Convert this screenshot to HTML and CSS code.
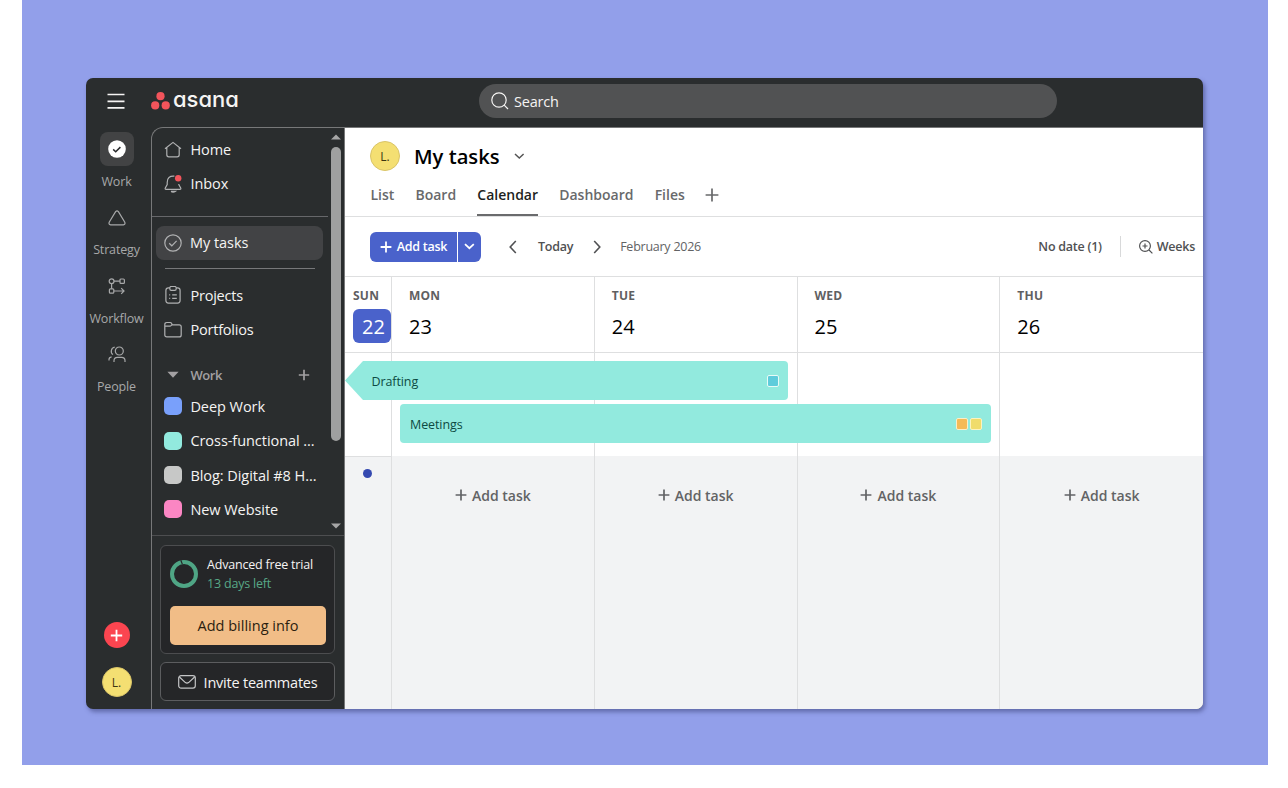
FILE: index.html
```html
<!DOCTYPE html>
<html lang="en">
<head>
  <meta charset="UTF-8" />
  <title>My tasks - Asana</title>
  <link rel="stylesheet" href="styles.css">
</head>
<body>
  <div class="backdrop">
    <div class="window">

      <header class="topbar">
        <svg class="menu" width="18" height="16" viewBox="0 0 18 16"><path d="M.5 1.5h17M.5 8.3h17M.5 14.8h17" /></svg>
        <div class="logo">
          <svg width="19" height="18" viewBox="0 0 19 18"><circle cx="9.5" cy="4.2" r="4.1" /><circle cx="4.2" cy="13.4" r="4.1" /><circle cx="14.7" cy="13.4" r="4.1" /></svg>
          <span>asana</span>
        </div>
        <div class="search">
          <svg width="18" height="18" viewBox="0 0 18 18"><circle cx="8" cy="8" r="7.2" /><path d="M13.2 13.2l3.8 3.8" /></svg>
          <span>Search</span>
        </div>
      </header>

      <nav class="rail">
        <div class="rail-item">
          <span class="rail-icon active">
            <svg width="18" height="18" viewBox="0 0 18 18"><circle cx="9" cy="9" r="8.8" fill="#fff" stroke="none" /><path d="M5.2 9.4l2.5 2.4 4.7-4.7" stroke="#2a2b2d" stroke-width="1.5" /></svg>
          </span>
          <span class="rail-label">Work</span>
        </div>
        <div class="rail-item">
          <span class="rail-icon">
            <svg width="18" height="16" viewBox="0 0 18 16"><path d="M7.6 1.6Q9 0 10.4 1.6L16.8 12.2Q17.6 14.6 15.4 14.9H2.6Q.4 14.6 1.2 12.2Z" /></svg>
          </span>
          <span class="rail-label">Strategy</span>
        </div>
        <div class="rail-item">
          <span class="rail-icon">
            <svg width="18" height="18" viewBox="0 0 18 18"><circle cx="3.6" cy="4.2" r="2.4" /><rect x="12" y="2" width="4.4" height="4.4" rx="1" /><rect x="1.4" y="11.8" width="4.4" height="4.4" rx="1" /><path d="M6 4.2h6M3.6 6.6v5.2M5.8 14h10M13.2 11.2l2.8 2.8-2.8 2.8" /></svg>
          </span>
          <span class="rail-label">Workflow</span>
        </div>
        <div class="rail-item">
          <span class="rail-icon">
            <svg width="18" height="17" viewBox="0 0 18 17"><circle cx="11.3" cy="5" r="4" /><path d="M6.7 1.2A4.1 4.1 0 0 0 5 8.6M6 16v-1.2q0-3.4 3.4-3.4h4.2q3.4 0 3.4 3.4V16M1 14.6v-1q0-2.4 2.6-2.8" /></svg>
          </span>
          <span class="rail-label">People</span>
        </div>
        <div class="rail-bottom">
          <span class="create"><svg width="13" height="13" viewBox="0 0 13 13"><path d="M6.5.8v11.4M.8 6.5h11.4" /></svg></span>
          <span class="avatar">L.</span>
        </div>
      </nav>

      <aside class="sidebar">
        <div class="side-scroll">
          <ul class="side-list top">
            <li><svg width="18" height="18" viewBox="0 0 18 18"><path d="M1 7.7L9 1.4l8 6.3M2.8 6.6v7.2q0 2 2 2h8.4q2 0 2-2V6.6" /></svg>Home</li>
            <li><svg width="18" height="18" viewBox="0 0 18 18"><path d="M10.4 1.2Q3.2.6 3.2 7.4v2.2L1.3 13q-.6 1.4.8 1.4h13.8q1.4 0 .8-1.4l-1.9-3.4V9" /><path d="M7 16.4h4.2q-2.1 1.4-4.2 0" /><circle cx="14.2" cy="3.2" r="3.2" fill="#f2545b" stroke="none" /></svg>Inbox</li>
          </ul>
          <div class="side-list current">
            <svg width="18" height="18" viewBox="0 0 18 18"><circle cx="9" cy="9" r="8.2" /><path d="M5.2 9.3l2.6 2.5 4.8-5" /></svg>My tasks
          </div>
          <div class="divider"></div>
          <ul class="side-list pages">
            <li><svg width="18" height="18" viewBox="0 0 18 18"><path d="M5.8 1.9H4.4Q1.9 1.9 1.9 4.4v10.2q0 2.5 2.5 2.5h9.2q2.5 0 2.5-2.5V4.4q0-2.5-2.5-2.5h-1.4M5.8 1.9q0-1.4 1.4-1.4h3.6q1.4 0 1.4 1.4v.8q0 1.6-1.4 1.6H7.2q-1.4 0-1.4-1.6zM8.2 8.8h4.6M8.2 12.4h4.6M5.2 8.8h1M5.2 12.4h1" /></svg>Projects</li>
            <li><svg width="18" height="18" viewBox="0 0 18 18"><path d="M.8 13.9V3.6Q.8 1.5 2.8 1.5h3.3q1 0 1.4.8l.8 1.5h6.9q2 0 2 2v8.1q0 2-2 2H2.8q-2 0-2-2zM.8 5.2h4.8q1.2 0 1.6-.7l.5-.7" /></svg>Portfolios</li>
          </ul>
          <div class="group">
            <svg width="18" height="8" viewBox="0 0 18 8"><path d="M3.4.8h11.2L9 6.8z" fill="#a2a0a2" stroke="none" /></svg>
            <span>Work</span>
            <svg class="plus" width="12" height="12" viewBox="0 0 12 12"><path d="M6 .8v10.4M.8 6h10.4" /></svg>
          </div>
          <ul class="side-list projects">
            <li><i class="chip blue"></i>Deep Work</li>
            <li><i class="chip aqua"></i>Cross-functional ...</li>
            <li><i class="chip gray"></i>Blog: Digital #8 H...</li>
            <li><i class="chip pink"></i>New Website</li>
          </ul>
          <div class="scrollbar">
            <svg width="10" height="6" viewBox="0 0 10 6"><path d="M0 5.5L5 .5l5 5z" /></svg>
            <div class="thumb"></div>
            <svg width="10" height="6" viewBox="0 0 10 6"><path d="M0 .5l5 5 5-5z" /></svg>
          </div>
        </div>
        <div class="side-foot">
          <div class="trial">
            <div class="trial-info">
              <svg width="28" height="28" viewBox="0 0 28 28"><circle cx="14" cy="14" r="12" /><path d="M12.4 4.4L10.8.2" /></svg>
              <div>
                <p>Advanced free trial</p>
                <p class="days">13 days left</p>
              </div>
            </div>
            <button class="billing">Add billing info</button>
          </div>
          <button class="invite">
            <svg width="18" height="14" viewBox="0 0 18 14"><rect x=".7" y=".7" width="16.6" height="12.4" rx="2.4" /><path d="M1.4 2l6 5.6q1.6 1.2 3.2 0l6-5.6" /></svg>
            Invite teammates
          </button>
        </div>
      </aside>

      <main class="main">
        <div class="title-row">
          <span class="avatar">L.</span>
          <h1>My tasks</h1>
          <svg width="11" height="7" viewBox="0 0 11 7"><path d="M1 1l4.3 4L9.6 1" /></svg>
        </div>
        <div class="tabs">
          <span>List</span>
          <span>Board</span>
          <span class="selected">Calendar</span>
          <span>Dashboard</span>
          <span>Files</span>
          <svg width="14" height="14" viewBox="0 0 14 14"><path d="M7 .6v12.8M.6 7h12.8" /></svg>
        </div>

        <div class="toolbar">
          <div class="add-btn">
            <span class="add-main"><svg width="12" height="12" viewBox="0 0 12 12"><path d="M6 .6v10.8M.6 6h10.8" /></svg>Add task</span>
            <span class="add-more"><svg width="11" height="7" viewBox="0 0 11 7"><path d="M1 1.2l4.4 4 4.4-4" /></svg></span>
          </div>
          <svg class="arrow prev" width="8" height="14" viewBox="0 0 8 14"><path d="M6.8 1L1.2 7l5.6 6" /></svg>
          <span class="today">Today</span>
          <svg class="arrow next" width="8" height="14" viewBox="0 0 8 14"><path d="M1.2 1l5.6 6-5.6 6" /></svg>
          <span class="month">February 2026</span>
          <span class="no-date">No date (1)</span>
          <span class="weeks">
            <svg width="14" height="14" viewBox="0 0 14 14"><circle cx="6" cy="6" r="5.4" /><path d="M10 10l3.4 3.4M6 3.5v5M3.5 6h5" /></svg>
            Weeks
          </span>
        </div>

        <div class="calendar">
          <div class="day sun">
            <div class="day-head"><b>SUN</b><span class="num now">22</span></div>
            <div class="slot"></div>
            <div class="rest"><i class="dot"></i></div>
          </div>
          <div class="day">
            <div class="day-head"><b>MON</b><span class="num">23</span></div>
            <div class="slot"></div>
            <div class="rest"><svg width="12" height="12" viewBox="0 0 12 12"><path d="M6 .6v10.8M.6 6h10.8" /></svg>Add task</div>
          </div>
          <div class="day">
            <div class="day-head"><b>TUE</b><span class="num">24</span></div>
            <div class="slot"></div>
            <div class="rest"><svg width="12" height="12" viewBox="0 0 12 12"><path d="M6 .6v10.8M.6 6h10.8" /></svg>Add task</div>
          </div>
          <div class="day">
            <div class="day-head"><b>WED</b><span class="num">25</span></div>
            <div class="slot"></div>
            <div class="rest"><svg width="12" height="12" viewBox="0 0 12 12"><path d="M6 .6v10.8M.6 6h10.8" /></svg>Add task</div>
          </div>
          <div class="day">
            <div class="day-head"><b>THU</b><span class="num">26</span></div>
            <div class="slot"></div>
            <div class="rest"><svg width="12" height="12" viewBox="0 0 12 12"><path d="M6 .6v10.8M.6 6h10.8" /></svg>Add task</div>
          </div>

          <!-- multi-day tasks sit over the day columns -->
          <div class="event drafting"><span>Drafting</span><i class="tag sky"></i></div>
          <div class="event meetings"><span>Meetings</span><i class="tag orange"></i><i class="tag yellow"></i></div>
        </div>
      </main>

    </div>
  </div>
</body>
</html>
```

FILE: styles.css
```css
* {
  box-sizing: border-box;
}

body {
  margin: 0;
  padding: 0 20px 0 22px;
  background: #fff;
  font-family: "Open Sans", "Noto Sans", sans-serif;
  font-size: 14.5px;
  color: #000;
}

svg {
  display: block;
  flex: none;
  fill: none;
  stroke: currentColor;
  stroke-width: 1.2;
}

ul, p, h1 {
  margin: 0;
  padding: 0;
  list-style: none;
}

.backdrop {
  height: 765px;
  padding: 78px 65px 0 64px;
  background: #929fea;
}

.window {
  height: 631px;
  display: grid;
  grid-template-columns: 65px 193px 1fr;
  grid-template-rows: 49px 1fr;
  overflow: hidden;
  background: #2a2d2e;
  border-radius: 7px;
  box-shadow: 2px 3px 4px rgba(50, 55, 110, 0.5);
}

/* top bar */

.topbar {
  grid-column: 1 / -1;
  display: flex;
  align-items: center;
  padding: 0 146px 3px 21px;
  color: #f5f4f3;
}

.menu {
  stroke-width: 1.7;
}

.logo {
  display: flex;
  align-items: center;
  width: 328px;
  margin-left: 26px;
}

.logo svg {
  fill: #f2545b;
  stroke: none;
}

.logo span {
  margin: -4px 0 0 3px;
  font-family: Inter, sans-serif;
  font-feature-settings: "cv11";
  font-size: 22px;
  font-weight: 500;
  line-height: 28px;
}

.search {
  display: flex;
  align-items: center;
  flex: 1;
  height: 34px;
  padding-left: 12px;
  background: #515253;
  border-radius: 17px;
}

.search span {
  margin-left: 5px;
  letter-spacing: -0.2px;
}

/* left rail */

.rail {
  display: flex;
  flex-direction: column;
  padding-top: 5px;
  color: #a7a8a9;
}

.rail-item {
  display: flex;
  flex-direction: column;
  align-items: center;
  height: 68.6px;
  margin-right: 4px;
}

.rail-icon {
  display: flex;
  align-items: center;
  justify-content: center;
  width: 34px;
  height: 34px;
  border-radius: 8px;
}

.rail-icon.active {
  background: #424344;
}

.rail-label {
  margin-top: 6.5px;
  font-size: 12.5px;
  letter-spacing: -0.15px;
  line-height: 18px;
}

.rail-bottom {
  display: flex;
  flex-direction: column;
  align-items: center;
  gap: 19px;
  margin: auto 4px 12px 0;
}

.create {
  display: flex;
  align-items: center;
  justify-content: center;
  width: 26px;
  height: 26px;
  color: #fff;
  background: #fb4550;
  border-radius: 50%;
}

.create svg {
  stroke-width: 1.8;
}

.avatar {
  width: 30px;
  height: 30px;
  color: #3d3510;
  background: #f4df72;
  border: 1px solid #d9c468;
  border-radius: 50%;
  font-size: 12px;
  line-height: 29px;
  text-align: center;
}

/* sidebar */

.sidebar {
  display: flex;
  flex-direction: column;
  color: #f5f4f3;
  border-top: 1px solid #777879;
  border-left: 1px solid #777879;
  border-top-left-radius: 12px;
}

.side-scroll {
  position: relative;
  height: 408px;
  border-bottom: 1px solid #4d4e50;
}

.side-list li,
.current {
  display: flex;
  align-items: center;
  gap: 8px;
  height: 34.3px;
  padding-left: 12.4px;
  letter-spacing: -0.05px;
  white-space: nowrap;
}

.side-list svg {
  color: #b0b1b2;
}

.side-list.top {
  width: 176px;
  height: 89px;
  padding-top: 4.4px;
  border-bottom: 1px solid #66676a;
}

.current {
  width: 167px;
  margin: 9px 0 0 4px;
  padding: 0 0 1px 8px;
  background: #424345;
  border-radius: 8px;
}

.divider {
  width: 150px;
  margin: 8px 0 9px 13px;
  border-top: 1px solid #77787a;
}

.side-list.pages li {
  letter-spacing: -0.2px;
}

.group {
  display: flex;
  align-items: center;
  height: 34px;
  margin-top: 11px;
  padding-left: 12.4px;
  color: #a2a0a2;
  font-size: 13px;
  font-weight: 600;
  letter-spacing: -0.4px;
}

.group span {
  width: 108px;
  margin-left: 8px;
}

.group .plus {
  stroke-width: 1.7;
}

.projects {
  margin-top: -2.6px;
}

.chip {
  width: 18px;
  height: 18px;
  border-radius: 5px;
}

.blue { background: #79a0fb; }
.aqua { background: #92eade; }
.gray { background: #c7c8c7; }
.pink { background: #fb86c3; }

.scrollbar {
  position: absolute;
  top: 6px;
  right: 3px;
}

.scrollbar svg {
  fill: #a5a6a6;
  stroke: none;
}

.thumb {
  width: 10px;
  height: 294px;
  margin: 7px 0 82px;
  background: #9fa0a0;
  border-radius: 5px;
}

.side-foot {
  padding: 9px 9px 0 8px;
}

.trial,
.invite {
  border: 1px solid #4c4d4f;
  border-radius: 6px;
  background: #252628;
}

.trial {
  height: 109px;
  padding: 9px;
}

.trial-info {
  display: flex;
  align-items: center;
  gap: 9px;
  height: 38px;
  font-size: 12.5px;
  letter-spacing: -0.2px;
  line-height: 19px;
  white-space: nowrap;
}

.trial-info svg {
  color: #4fa585;
  stroke-width: 4;
}

.trial-info svg path {
  stroke: #252628;
  stroke-width: 1.2;
}

.days {
  color: #58a887;
}

button {
  font-family: inherit;
  font-size: 14.5px;
}

.billing {
  display: block;
  width: 156px;
  height: 39px;
  margin: 13px 0 0;
  color: #2b1e10;
  background: #f1bd87;
  border: 0;
  border-radius: 5px;
}

.invite {
  display: flex;
  align-items: center;
  justify-content: center;
  gap: 8px;
  width: 100%;
  height: 39px;
  margin-top: 8px;
  padding: 1px 0 0 0;
  color: #f5f4f3;
  border-color: #5c5d5f;
  letter-spacing: -0.22px;
  white-space: nowrap;
}

.invite svg {
  color: #c4c5c6;
}

/* main area */

.main {
  display: flex;
  flex-direction: column;
  background: #fff;
  border-top: 1px solid #777879;
  border-left: 1px solid #777879;
}

.title-row {
  display: flex;
  align-items: center;
  height: 56px;
  padding-left: 25px;
}

h1 {
  margin: -1px 14px 0 14px;
  font-size: 20.2px;
  font-weight: 600;
}

.title-row svg {
  color: #555;
  stroke-width: 1.5;
}

.tabs {
  display: flex;
  height: 33px;
  padding-left: 25.4px;
  color: #68696b;
  border-bottom: 1px solid #dedfe0;
  font-weight: 600;
  font-size: 14px;
  line-height: 22px;
}

.tabs span {
  height: 32px;
  margin-right: 21.2px;
}

.tabs .selected {
  color: #1e1f21;
  border-bottom: 2px solid #6a6b6d;
}

.tabs svg {
  margin: 4px 0 0 -1px;
  stroke-width: 1.7;
}

.toolbar {
  display: flex;
  align-items: center;
  height: 59px;
  padding: 0 8px 0 25px;
  color: #505153;
  font-size: 12.5px;
  font-weight: 600;
  letter-spacing: -0.25px;
  white-space: nowrap;
}

.add-btn {
  display: flex;
  gap: 1px;
  color: #fff;
}

.add-main,
.add-more {
  display: flex;
  align-items: center;
  justify-content: center;
  height: 30px;
  background: #4a62cb;
}

.add-main {
  gap: 5px;
  width: 87px;
  border-radius: 6px 0 0 6px;
}

.add-more {
  width: 23px;
  border-radius: 0 6px 6px 0;
}

.add-btn svg {
  stroke-width: 1.8;
}

.arrow {
  stroke-width: 1.6;
}

.prev {
  margin: 0 21px 0 28px;
}

.next {
  margin: 0 19px 0 20px;
}

.month {
  color: #626364;
  font-weight: 400;
}

.no-date {
  margin-left: auto;
  padding-right: 18px;
}

.weeks {
  display: flex;
  align-items: center;
  gap: 4px;
  height: 21px;
  padding-left: 18px;
  border-left: 1px solid #d8d9da;
}

.calendar {
  position: relative;
  display: grid;
  grid-template-columns: 47px repeat(4, 1fr);
  flex: 1;
}

.day {
  display: flex;
  flex-direction: column;
  overflow: hidden;
  border-top: 1px solid #dedfe0;
  border-right: 1px solid #dedfe0;
}

.day:nth-child(5) {
  border-right: 0;
}

.day-head {
  height: 76px;
  padding: 10px 0 0 17px;
  border-bottom: 1px solid #dedfe0;
}

.day-head b {
  display: block;
  height: 18px;
  color: #5f6062;
  font-size: 12px;
  letter-spacing: 0.25px;
  line-height: 18px;
}

.num {
  display: block;
  height: 34px;
  margin-top: 4px;
  font-size: 20px;
  line-height: 36px;
}

.sun .day-head {
  padding-left: 8px;
}

.now {
  width: 38px;
  padding-left: 9px;
  color: #fff;
  background: #4a62cb;
  border-radius: 6px;
}

.slot {
  height: 103px;
}

.rest {
  display: flex;
  align-items: flex-start;
  justify-content: center;
  gap: 5px;
  flex: 1;
  padding-top: 29px;
  color: #626365;
  background: #f2f3f4;
  font-size: 14px;
  font-weight: 600;
  line-height: 22px;
}

.rest svg {
  margin-top: 4px;
  stroke-width: 1.7;
}

.sun .rest {
  padding: 12px 1px 0 0;
  border-top: 1px solid #dedfe0;
}

.dot {
  width: 9px;
  height: 9px;
  background: #3549b0;
  border-radius: 50%;
}

.event {
  position: absolute;
  display: flex;
  align-items: center;
  gap: 2px;
  height: 39px;
  background: #92eade;
  border-radius: 4px;
  color: #0d4a43;
  font-size: 12.5px;
}

.event span {
  flex: 1;
  padding-top: 2px;
  letter-spacing: -0.1px;
}

.drafting {
  top: 85px;
  left: 0;
  width: 443px;
  padding: 0 9px 0 26.5px;
  clip-path: polygon(0 50%, 18px 0, 100% 0, 100% 100%, 18px 100%);
}

.meetings {
  top: 128px;
  left: 55px;
  width: 591px;
  padding: 0 9px 0 10px;
}

.tag {
  width: 12px;
  height: 12px;
  border: 1px solid #e8fbf6;
  border-radius: 2px;
}

.sky { background: #5fccdb; }
.orange { background: #f5ba57; border-color: #fbeec8; }
.yellow { background: #f0dc6b; border-color: #fbf3c0; }
```
